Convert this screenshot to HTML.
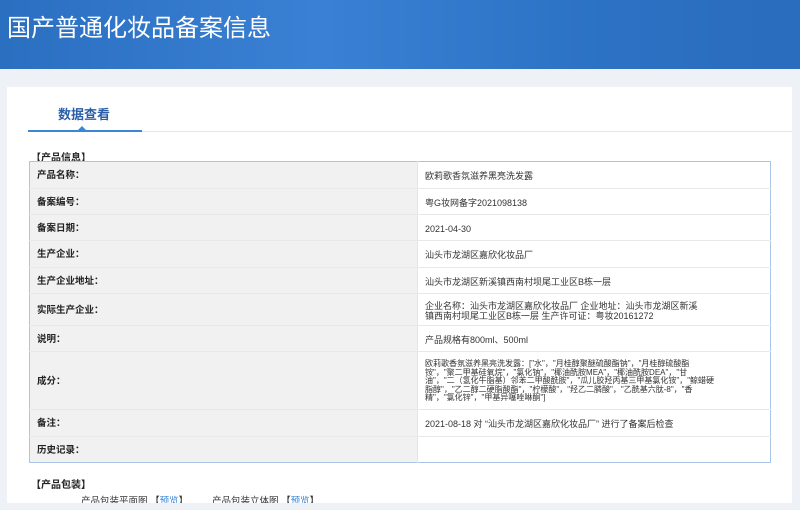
<!DOCTYPE html>
<html><head><meta charset="utf-8"><style>
*{margin:0;padding:0;box-sizing:border-box}
body{width:800px;height:510px;overflow:hidden;background:#eef1f5;font-family:"Liberation Sans","Noto Sans CJK SC",sans-serif;position:relative}
.hd{position:absolute;left:0;top:0;width:800px;height:69px;background:linear-gradient(90deg,#2a6fc0 0%,#3a80d4 40%,#2d73c6 70%,#2a6cbd 100%)}
.hd h1{position:absolute;left:7px;top:8px;font-size:24px;font-weight:normal;color:#fff}
.card{position:absolute;left:7px;top:87px;width:785px;height:423px;background:#fff}
.tab{position:absolute;left:58px;top:104px;font-size:13px;font-weight:bold;color:#2a5fa8}
.line1{position:absolute;left:28px;top:130px;width:114px;height:2px;background:#3b87d6}
.line2{position:absolute;left:142px;top:131px;width:650px;height:1px;background:#e3e6ea}
.tri{position:absolute;left:78px;top:126px;width:0;height:0;border-left:4px solid transparent;border-right:4px solid transparent;border-bottom:4px solid #3b87d6}
.sec{position:absolute;left:31px;font-size:10px;font-weight:bold;color:#222}
table{position:absolute;left:29px;top:161px;width:742px;border-collapse:collapse;border:1px solid #a9c6ea;font-size:9px;color:#333}
td{border-bottom:1px solid #e8e8e8;vertical-align:middle;line-height:10px;padding-top:2px}
td.l{width:388px;background:#f1f1f1;padding-left:7px;font-weight:bold;font-size:9.5px;color:#222;border-right:1px solid #e4e4e4}
td.r{padding-left:7px;padding-right:7px;background:#fff}
.pk{position:absolute;top:493px;font-size:9.5px;color:#333}
.pk span{color:#3b87d6}
</style></head><body>
<div class="hd"><h1>国产普通化妆品备案信息</h1></div>
<div class="card"></div>
<div class="tab">数据查看</div>
<div class="tri"></div><div class="line1"></div><div class="line2"></div>
<div class="sec" style="top:149px">【产品信息】</div>
<table>
<tr style="height:27px"><td class="l">产品名称：</td><td class="r">欧莉歌香氛滋养黑亮洗发露</td></tr>
<tr style="height:26px"><td class="l">备案编号：</td><td class="r">粤G妆网备字2021098138</td></tr>
<tr style="height:26px"><td class="l">备案日期：</td><td class="r">2021-04-30</td></tr>
<tr style="height:27px"><td class="l">生产企业：</td><td class="r">汕头市龙湖区嘉欣化妆品厂</td></tr>
<tr style="height:26px"><td class="l">生产企业地址：</td><td class="r">汕头市龙湖区新溪镇西南村坝尾工业区B栋一层</td></tr>
<tr style="height:32px"><td class="l">实际生产企业：</td><td class="r">企业名称：汕头市龙湖区嘉欣化妆品厂 企业地址：汕头市龙湖区新溪<br>镇西南村坝尾工业区B栋一层 生产许可证：粤妆20161272</td></tr>
<tr style="height:26px"><td class="l">说明：</td><td class="r">产品规格有800ml、500ml</td></tr>
<tr style="height:58px"><td class="l">成分：</td><td class="r" style="line-height:8.4px;font-size:8px">欧莉歌香氛滋养黑亮洗发露：["水"，"月桂醇聚醚硫酸酯钠"，"月桂醇硫酸酯<br>铵"，"聚二甲基硅氧烷"，"氯化钠"，"椰油酰胺MEA"，"椰油酰胺DEA"，"甘<br>油"，"二（氢化牛脂基）邻苯二甲酸酰胺"，"瓜儿胶羟丙基三甲基氯化铵"，"鲸蜡硬<br>脂醇"，"乙二醇二硬脂酸酯"，"柠檬酸"，"羟乙二膦酸"，"乙酰基六肽-8"，"香<br>精"，"氯化锌"，"甲基异噻唑啉酮"]</td></tr>
<tr style="height:27px"><td class="l">备注：</td><td class="r">2021-08-18 对 “汕头市龙湖区嘉欣化妆品厂” 进行了备案后检查</td></tr>
<tr style="height:26px"><td class="l" style="border-bottom:none">历史记录：</td><td class="r" style="border-bottom:none"></td></tr>
</table>
<div class="sec" style="top:476px">【产品包装】</div>
<div class="pk" style="left:81px">产品包装平面图 【<span>预览</span>】</div>
<div class="pk" style="left:212px">产品包装立体图 【<span>预览</span>】</div>
<div style="position:absolute;left:0;top:503px;width:800px;height:7px;background:#eef1f5"></div>
</body></html>
